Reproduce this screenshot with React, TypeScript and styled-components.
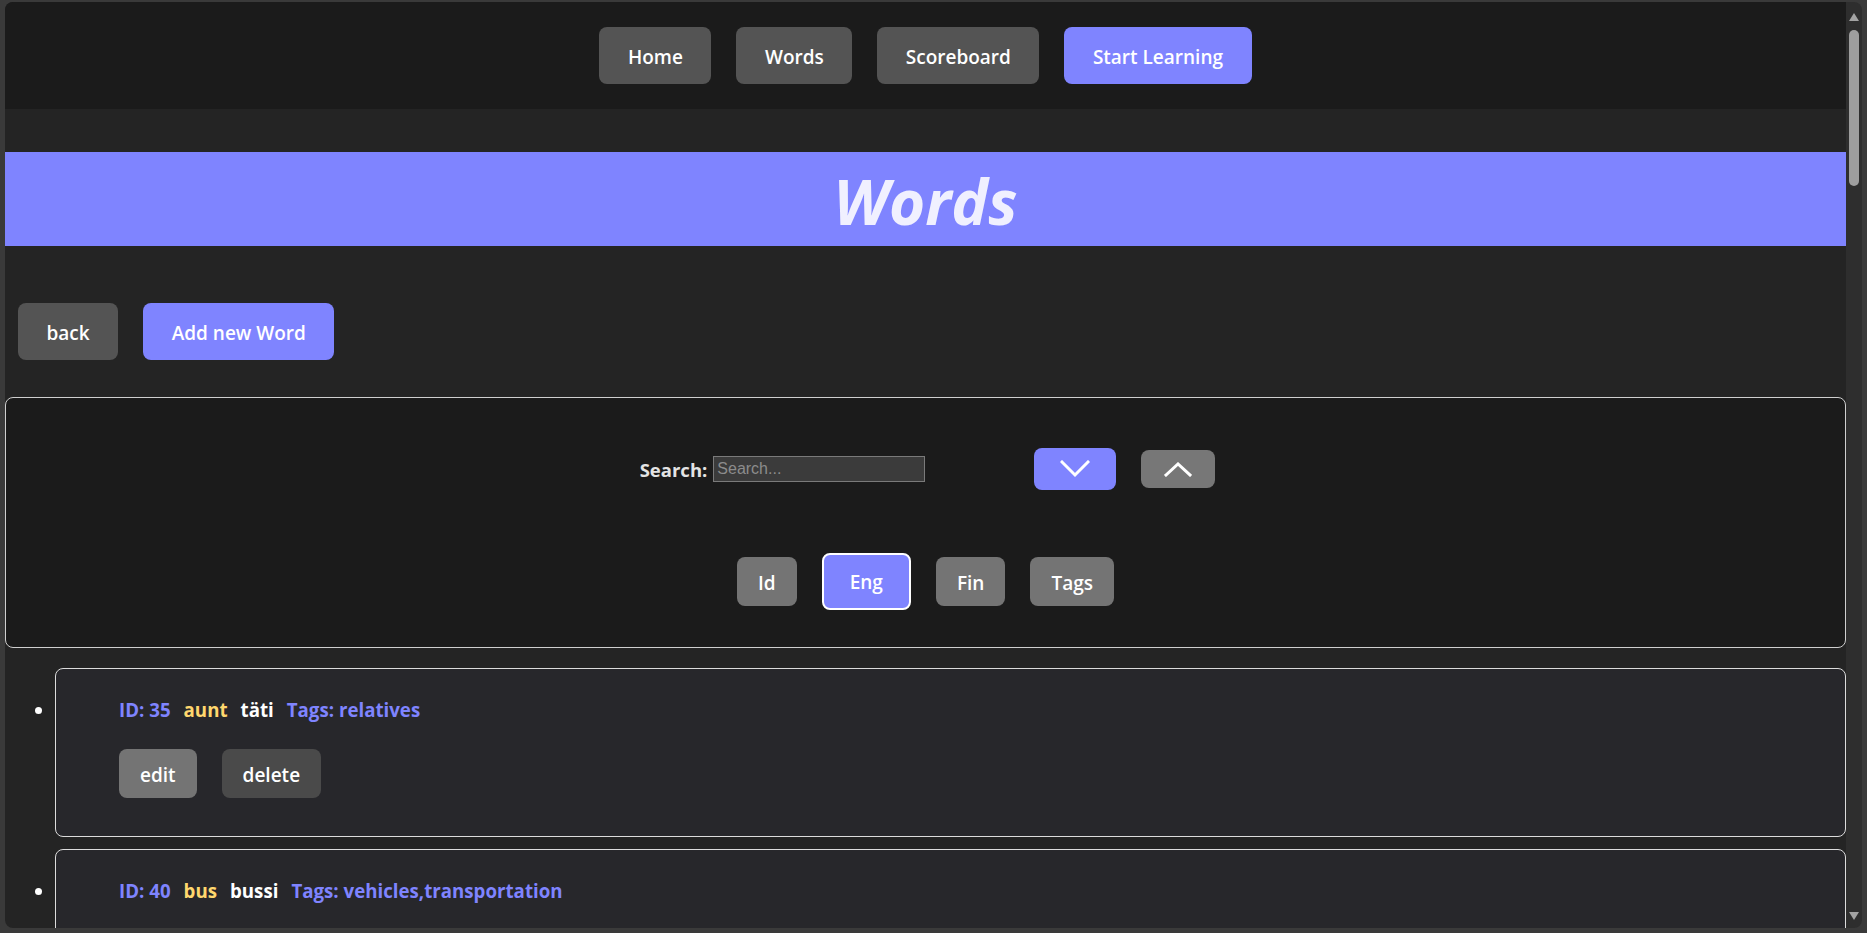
import React from "react";
import styled, { createGlobalStyle } from "styled-components";

const GlobalStyle = createGlobalStyle`
  html, body {
    margin: 0;
    padding: 0;
    height: 100%;
    overflow: hidden;
    background: #3a3a3a;
  }
  #root { height: 100%; }
  *, *::before, *::after { box-sizing: border-box; }
`;

const Frame = styled.div`
  height: 100vh;
  padding: 2px 5px 5px 5px;
  display: flex;
`;

const Viewport = styled.div`
  flex: 1;
  display: flex;
  min-height: 0;
  border-radius: 8px;
  overflow: hidden;
`;

const Page = styled.main`
  flex: 1;
  min-width: 0;
  overflow: hidden;
  background: #242424;
  color: #fff;
  font-family: "Open Sans", "Noto Sans", sans-serif;
`;

const ScrollTrack = styled.div`
  width: 16px;
  flex: 0 0 16px;
  background: #2e2e2e;
  display: flex;
  flex-direction: column;
  align-items: center;
  padding: 11px 0 8px;
`;

const Arrow = styled.div<{ $down?: boolean }>`
  width: 0;
  height: 0;
  border-left: 5px solid transparent;
  border-right: 5px solid transparent;
  ${(p) =>
    p.$down ? "border-top: 8px solid #a3a3a3;" : "border-bottom: 8px solid #a3a3a3;"}
`;

const Thumb = styled.div`
  width: 10px;
  height: 156px;
  margin-top: 9px;
  background: #9e9e9e;
  border-radius: 5px;
`;

const TrackFill = styled.div`
  flex: 1;
`;

const Nav = styled.nav`
  height: 107px;
  background: #1b1b1b;
  display: flex;
  justify-content: center;
  align-items: center;
  gap: 25px;
`;

type Tone = "gray" | "primary" | "muted" | "deep";

const toneBg: Record<Tone, string> = {
  gray: "#545454",
  primary: "#7f84ff",
  muted: "#747474",
  deep: "#4a4a4a",
};

const Button = styled.button<{ $tone?: Tone; $size?: "lg" | "md"; $active?: boolean }>`
  font-family: inherit;
  font-size: 19px;
  font-weight: 600;
  line-height: 27px;
  color: #fff;
  border-radius: 8px;
  cursor: pointer;
  background: ${(p) => toneBg[p.$tone || "gray"]};
  border: ${(p) => (p.$active ? "2px solid #ffffff" : "none")};
  padding: ${(p) =>
    p.$size === "md"
      ? p.$active
        ? "14px 26px 12px"
        : "13px 21px 9px"
      : "17px 28.5px 13px"};
`;

const Banner = styled.header`
  margin-top: 43px;
  height: 94px;
  background: #7f84ff;
  display: flex;
  align-items: center;
  justify-content: center;
`;

const Title = styled.h1`
  margin: 0;
  padding-top: 3px;
  font-size: 62px;
  line-height: 1;
  font-style: italic;
  font-weight: 700;
  color: #f0f0ff;
`;

const ActionRow = styled.div`
  margin-top: 57px;
  padding-left: 13px;
  display: flex;
  gap: 25px;
`;

const FilterBox = styled.section`
  margin-top: 37px;
  height: 251px;
  border: 1px solid #cfcfcf;
  border-radius: 8px;
  background: #1b1b1b;
  display: flex;
  flex-direction: column;
  align-items: center;
  padding-top: 50px;
  gap: 63px;
`;

const SearchRow = styled.div`
  display: flex;
  align-items: center;
  gap: 25px;
  padding-left: 4px;
`;

const SearchGroup = styled.label`
  display: flex;
  align-items: center;
  margin-right: 84px;
  font-size: 18.5px;
  font-weight: 700;
  color: #e4e4e4;
`;

const SearchInput = styled.input`
  margin-left: 6px;
  width: 212px;
  height: 26px;
  padding: 1px 3px;
  background: #3b3b3b;
  border: 1px solid #7a7a7a;
  color: #fff;
  font-family: "Liberation Sans", Arial, sans-serif;
  font-size: 16px;
  outline: none;
  &::placeholder {
    color: #8c8c8c;
  }
`;

const IconButton = styled.button<{ $active?: boolean }>`
  display: flex;
  align-items: center;
  justify-content: center;
  border: none;
  border-radius: 8px;
  cursor: pointer;
  padding: 0;
  background: ${(p) => (p.$active ? "#7f84ff" : "#777777")};
  width: ${(p) => (p.$active ? "82px" : "74px")};
  height: ${(p) => (p.$active ? "42px" : "38px")};
`;

const SortRow = styled.div`
  display: flex;
  align-items: center;
  gap: 25px;
`;

const WordList = styled.ul`
  margin: 20px 0 0;
  padding: 0 0 0 50px;
  list-style: disc;
`;

const WordItem = styled.li`
  margin-bottom: 12px;
  font-size: 19px;
  &::marker {
    color: #fff;
  }
`;

const WordCard = styled.div`
  border: 1px solid #dcdcdc;
  border-radius: 8px;
  background: #27272b;
  padding: 27px 0 38px 63px;
`;

const InfoRow = styled.div`
  display: flex;
  gap: 13px;
  font-size: 18.7px;
  font-weight: 700;
  line-height: 27px;
`;

type InfoTone = "accent" | "gold" | "white";
const infoColor: Record<InfoTone, string> = {
  accent: "#7f84ff",
  gold: "#ffd76e",
  white: "#ffffff",
};

const Info = styled.span<{ $tone: InfoTone }>`
  color: ${(p) => infoColor[p.$tone]};
`;

const CardActions = styled.div`
  margin-top: 26px;
  display: flex;
  gap: 25px;
`;

const ChevronDown = () => (
  <svg width="30" height="18" viewBox="0 0 30 18" fill="none">
    <path d="M2 2 L15 15 L28 2" stroke="#fff" strokeWidth="3" strokeLinecap="square" />
  </svg>
);

const ChevronUp = () => (
  <svg width="28" height="15" viewBox="0 0 28 15" fill="none">
    <path d="M2 13 L14 2 L26 13" stroke="#fff" strokeWidth="3" strokeLinecap="square" />
  </svg>
);

const words = [
  { id: 35, eng: "aunt", fin: "täti", tags: "relatives" },
  { id: 40, eng: "bus", fin: "bussi", tags: "vehicles,transportation" },
];

export default function App() {
  return (
    <>
      <GlobalStyle />
      <Frame>
        <Viewport>
          <Page>
            <Nav>
              <Button $tone="gray">Home</Button>
              <Button $tone="gray">Words</Button>
              <Button $tone="gray">Scoreboard</Button>
              <Button $tone="primary">Start Learning</Button>
            </Nav>
            <Banner>
              <Title>Words</Title>
            </Banner>
            <ActionRow>
              <Button $tone="gray">back</Button>
              <Button $tone="primary">Add new Word</Button>
            </ActionRow>
            <FilterBox>
              <SearchRow>
                <SearchGroup>
                  Search:
                  <SearchInput placeholder="Search..." />
                </SearchGroup>
                <IconButton $active aria-label="descending">
                  <ChevronDown />
                </IconButton>
                <IconButton aria-label="ascending">
                  <ChevronUp />
                </IconButton>
              </SearchRow>
              <SortRow>
                <Button $size="md" $tone="muted">Id</Button>
                <Button $size="md" $tone="primary" $active>Eng</Button>
                <Button $size="md" $tone="muted">Fin</Button>
                <Button $size="md" $tone="muted">Tags</Button>
              </SortRow>
            </FilterBox>
            <WordList>
              {words.map((w) => (
                <WordItem key={w.id}>
                  <WordCard>
                    <InfoRow>
                      <Info $tone="accent">ID: {w.id}</Info>
                      <Info $tone="gold">{w.eng}</Info>
                      <Info $tone="white">{w.fin}</Info>
                      <Info $tone="accent">Tags: {w.tags}</Info>
                    </InfoRow>
                    <CardActions>
                      <Button $size="md" $tone="muted">edit</Button>
                      <Button $size="md" $tone="deep">delete</Button>
                    </CardActions>
                  </WordCard>
                </WordItem>
              ))}
            </WordList>
          </Page>
          <ScrollTrack>
            <Arrow />
            <Thumb />
            <TrackFill />
            <Arrow $down />
          </ScrollTrack>
        </Viewport>
      </Frame>
    </>
  );
}
